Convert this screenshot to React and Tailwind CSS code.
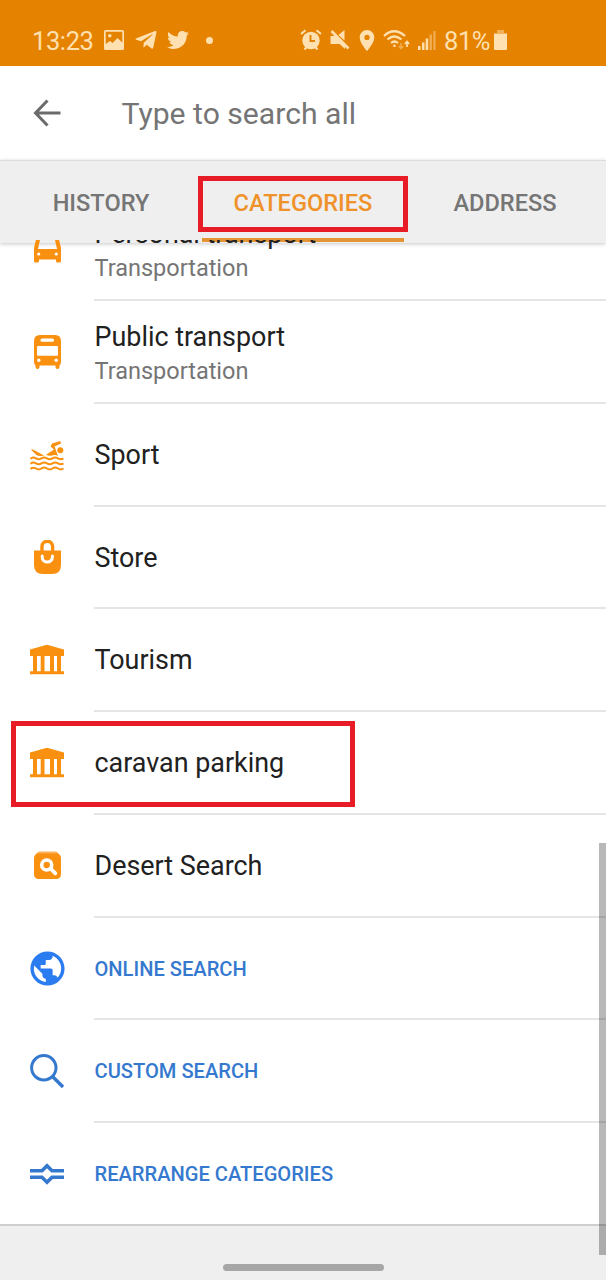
import { MdPublic, MdLocationOn } from "react-icons/md";
import { FaTelegramPlane, FaTwitter } from "react-icons/fa";

const Icon = ({ children }) => (
  <svg viewBox="0 0 34 34" className="h-[34px] w-[34px] shrink-0" fill="currentColor">{children}</svg>
);

const Car = () => (
  <Icon>
    <path fillRule="evenodd" d="M4 20V16L6 7.5Q7 4 10.500 4H24.500Q28 4 29 7.500L31 16V20V29Q31 30.500 29.500 30.500H27.500Q26 30.500 26 29V27.500H9V29Q9 30.500 7.500 30.500H5.500Q4 30.500 4 29ZM8 17H27L24.800 7H10.200Z" />
    <circle cx="8.700" cy="22" r="1.600" fill="#fff" />
    <circle cx="26.300" cy="22" r="1.600" fill="#fff" />
  </Icon>
);
const Bus = () => (
  <Icon>
    <path d="M10 0H25Q31 0 31 6V27Q31 29.500 29.500 30.500V32Q29.500 34 27.500 34T25.500 32V30.500H9.500V32Q9.500 34 7.500 34T5.500 32V30.500Q4 29.500 4 27V6Q4 0 10 0Z" />
    <rect x="10.500" y="3.500" width="13.500" height="3.300" rx="1.600" fill="#fff" />
    <rect x="7" y="11" width="21" height="9.800" rx="1" fill="#fff" />
    <circle cx="8.800" cy="25.300" r="1.700" fill="#fff" />
    <circle cx="26.200" cy="25.300" r="1.700" fill="#fff" />
  </Icon>
);
const Swim = () => (
  <Icon>
    <circle cx="30.300" cy="13.200" r="3" />
    <path d="M30.300 4L22 6.500L20.600 9.500L24 12.500L16 17.800Q19 19.500 22 18.500Q25 17.500 28 18.800L24.500 9.400L31 6.500Z" />
    <path d="M1 12.800Q2 12 3.500 12.800L14 18.500Q9 19.800 6.500 18Z" />
    <g fill="none" stroke="currentColor" strokeWidth="2">
      <path d="M0.500 21.800Q3.250 19.600 6 21.400T11.500 21.400T17 21.400T22.500 21.400T28 21.400T33.500 21.400" />
      <path d="M0.500 26.800Q3.250 24.600 6 26.400T11.500 26.400T17 26.400T22.500 26.400T28 26.400T33.500 26.400" />
      <path d="M0.500 31.900Q3.250 29.700 6 31.500T11.500 31.500T17 31.500T22.500 31.500T28 31.500T33.500 31.500" />
    </g>
  </Icon>
);
const Bag = () => (
  <Icon>
    <path d="M4 10.500H31V25Q31 34 22 34H13Q4 34 4 25Z" />
    <path d="M12 12V6.500A5.300 5.300 0 0 1 22.600 6.500V12" fill="none" stroke="currentColor" strokeWidth="3.400" />
    <path d="M12.200 16V17A5.100 5.100 0 0 0 22.400 17V16" fill="none" stroke="#fff" strokeWidth="3" strokeLinecap="round" />
  </Icon>
);
const Museum = () => (
  <Icon>
    <path d="M17 1.700L34 6.500V13H31V28.300H34V31.300H0V28.300H3V13H0V6.500ZM7 13V28.300H10.700V13ZM14.500 13V28.300H20V13ZM24 13V28.300H27V13Z" fillRule="evenodd" />
  </Icon>
);
const BoxSearch = () => (
  <Icon>
    <path d="M5.500 8Q6.500 3.500 10 3.500H25Q28.500 3.500 29.500 8Z" opacity="0.700" />
    <rect x="4" y="5.500" width="27" height="25.500" rx="4.500" />
    <circle cx="16.700" cy="17" r="5" fill="none" stroke="#fff" strokeWidth="3.600" />
    <path d="M20.500 20.500L25.300 25.300" stroke="#fff" strokeWidth="3.800" strokeLinecap="round" />
  </Icon>
);
const Globe = () => <MdPublic className="-mx-[3.500px] h-[41px] w-[41px] shrink-0 text-[#2a7cf0]" />;
const Magnifier = () => (
  <Icon>
    <g fill="none" stroke="currentColor" strokeWidth="3">
      <circle cx="13.800" cy="13.800" r="12.200" />
      <path d="M22.500 22.500L33 33" strokeWidth="3.400" />
    </g>
  </Icon>
);
const Rearrange = () => (
  <Icon>
    <path d="M0 13.700H12L17 8.700L22 13.700H34M0 20.300H12L17 25.300L22 20.300H34" fill="none" stroke="currentColor" strokeWidth="3.600" />
  </Icon>
);

const rows = [
  { icon: Car, title: "Personal transport", sub: "Transportation" },
  { icon: Bus, title: "Public transport", sub: "Transportation" },
  { icon: Swim, title: "Sport" },
  { icon: Bag, title: "Store" },
  { icon: Museum, title: "Tourism" },
  { icon: Museum, title: "caravan parking", marked: true },
  { icon: BoxSearch, title: "Desert Search" },
  { icon: Globe, title: "ONLINE SEARCH", action: true },
  { icon: Magnifier, title: "CUSTOM SEARCH", action: true },
  { icon: Rearrange, title: "REARRANGE CATEGORIES", action: true },
];

function Row({ icon: Glyph, title, sub, action, marked }) {
  return (
    <li className="group relative flex h-[102.750px] shrink-0 pl-[30px] first:-mt-[41.600px]">
      <div className={`flex w-16 items-center pb-0.5 ${action ? "text-[#3579cf]" : "text-[#f9900f]"}`}>
        <Glyph />
      </div>
      <div
        className={`flex flex-1 flex-col justify-center whitespace-nowrap border-b-2 border-[#e5e5e5] pl-[0.500px] group-last:border-transparent ${sub ? "pt-[5px]" : "pt-px"}`}
      >
        {action ? (
          <span className="text-[20.130px] font-medium leading-6 text-[#3579cf]">{title}</span>
        ) : (
          <span className="text-[26.900px] leading-[34px] text-[#212121]">{title}</span>
        )}
        {sub && <span className="text-[23.500px] leading-[34px] text-[#757575]">{sub}</span>}
      </div>
      {marked && <div className="absolute left-[11px] top-[9px] h-[86px] w-[344px] border-5 border-[#e81c27]" />}
    </li>
  );
}

function StatusBar() {
  return (
    <header className="flex h-[66px] shrink-0 items-center bg-[#e58200] pl-8 pt-[14px] text-[25.500px] text-[#ffe0b0]">
      <span className="w-[72px] pt-0.5 tracking-[-0.400px]">13:23</span>
      <svg viewBox="0 0 20 20" className="h-5 w-5" fill="currentColor">
        <path fillRule="evenodd" d="M1.500 0H18.500Q20 0 20 1.500V18.500Q20 20 18.500 20H1.500Q0 20 0 18.500V1.500Q0 0 1.500 0ZM1.700 1.700V14L6 11L8.500 13L13.500 8L18.300 12.500V1.700Z" />
        <circle cx="5.800" cy="5.800" r="1.800" />
      </svg>
      <FaTelegramPlane className="ml-[10px] h-6 w-6" />
      <FaTwitter className="ml-[9px] h-[22px] w-[22px]" />
      <span className="ml-[17px] h-[7px] w-[7px] rounded-full bg-current" />
      <svg viewBox="0 0 22 22" className="ml-[87px] h-[22px] w-[22px]" fill="currentColor">
        <circle cx="11" cy="11.500" r="8.700" />
        <path d="M1 5L5.500 1.200M21 5L16.500 1.200M4.500 20.500L7 17.500M17.500 20.500L15 17.500" stroke="currentColor" strokeWidth="2" />
        <path d="M10.500 6V12H15" fill="none" stroke="#e58200" strokeWidth="1.900" />
      </svg>
      <svg viewBox="0 0 20 22" className="ml-[8px] h-[22px] w-5" fill="currentColor">
        <path d="M0.500 7H6L15 16V20L9.500 15H0.500ZM8.500 6L14.500 1V11.500Z" />
        <path d="M1.500 2L18.500 19.500" stroke="currentColor" strokeWidth="2.600" />
      </svg>
      <MdLocationOn className="ml-[3px] h-[25px] w-[28px]" />
      <svg viewBox="0 0 28 22" className="ml-[2px] h-[22px] w-7" fill="none" stroke="currentColor" strokeWidth="2.200">
        <path d="M1 7Q11 -2.500 22 7M4.500 10.500Q11 4.500 18.500 10.500M8 14Q11.500 11 15 14" />
        <circle cx="11.500" cy="16.800" r="1.300" fill="currentColor" stroke="none" />
        <path d="M24 18V13.500M21.800 15L24 12.500L26.200 15" strokeWidth="1.700" />
        <path d="M18 14V18.500M15.800 17L18 19.500L20.200 17" strokeWidth="1.500" opacity="0.450" />
      </svg>
      <svg viewBox="0 0 18 20" className="ml-[7px] h-5 w-[18px]" fill="currentColor">
        <path d="M0 16H2.500V20H0ZM4 12.500H6.500V20H4ZM7.700 8.500H10.200V20H7.700Z" />
        <path d="M11.500 4.500H14V20H11.500ZM15.300 1H17.600V20H15.300Z" opacity="0.450" />
      </svg>
      <span className="ml-[8px] w-[50px] pt-0.5 tracking-[-0.400px]">81%</span>
      <svg viewBox="0 0 13 20" className="h-5 w-[13px]" fill="currentColor">
        <path d="M3 0H10V3H13V5H0V3H3Z" opacity="0.500" />
        <path d="M0 4H13V19Q13 20 12 20H1Q0 20 0 19Z" />
      </svg>
    </header>
  );
}

export default function App() {
  return (
    <div className="relative flex h-[1280px] w-[606px] flex-col overflow-hidden bg-white font-[Roboto,sans-serif]">
      <StatusBar />
      <div className="flex h-[94px] shrink-0 items-center pl-[33px] text-[#757575]">
        <svg viewBox="0 0 28 28" className="h-7 w-7" fill="none" stroke="#6b6b6b" strokeWidth="3">
          <path d="M27.500 14H3M14.500 1.500L2.500 14L14.500 26.500" />
        </svg>
        <span className="ml-[60.500px] pt-0.5 text-[30.150px]">Type to search all</span>
      </div>
      <nav className="relative grid h-[83px] shrink-0 grid-cols-3 border-t border-[#dcdcdc] bg-[#efefef] text-center text-[23.600px] font-medium leading-[85px] text-[#757575] shadow-[0_1px_4px_rgba(0,0,0,0.220)]">
        <span>HISTORY</span>
        <span className="text-[#f0922a]">CATEGORIES</span>
        <span>ADDRESS</span>
        <div className="absolute bottom-px left-[202px] h-1 w-[202px] bg-[#e59435]" />
        <div className="absolute left-[198px] top-[15px] h-[56px] w-[210px] border-5 border-[#e81c27]" />
      </nav>
      <ul className="relative -mt-[3px] flex h-[984px] shrink-0 flex-col overflow-hidden">
        {rows.map((row) => (
          <Row key={row.title} {...row} />
        ))}
      </ul>
      <footer className="flex flex-1 justify-center border-t-2 border-[#cfcfcf] bg-[#efefef] pt-[38px]">
        <div className="h-[7px] w-[161px] rounded-full bg-[#a6a6a6]" />
      </footer>
      <div className="absolute right-0 top-[843px] h-[412px] w-[7px] bg-black/28" />
    </div>
  );
}
